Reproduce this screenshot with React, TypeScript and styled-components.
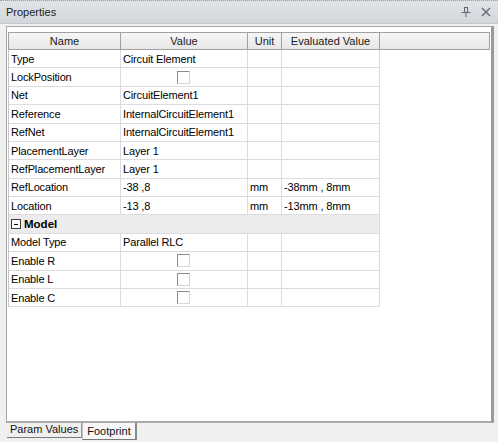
import React from "react";
import styled, { createGlobalStyle } from "styled-components";

const GlobalStyle = createGlobalStyle`
  html, body {
    margin: 0;
    padding: 0;
    background: #f0f0f0;
  }
  * {
    box-sizing: border-box;
  }
`;

const ROW_HEIGHT = 18.38;
const COLUMNS = "112px 127px 34px 98px";

type Row =
  | { kind: "prop"; name: string; value?: string; check?: boolean; unit?: string; evaluated?: string }
  | { kind: "category"; name: string };

const rows: Row[] = [
  { kind: "prop", name: "Type", value: "Circuit Element" },
  { kind: "prop", name: "LockPosition", check: true },
  { kind: "prop", name: "Net", value: "CircuitElement1" },
  { kind: "prop", name: "Reference", value: "InternalCircuitElement1" },
  { kind: "prop", name: "RefNet", value: "InternalCircuitElement1" },
  { kind: "prop", name: "PlacementLayer", value: "Layer 1" },
  { kind: "prop", name: "RefPlacementLayer", value: "Layer 1" },
  { kind: "prop", name: "RefLocation", value: "-38 ,8", unit: "mm", evaluated: "-38mm , 8mm" },
  { kind: "prop", name: "Location", value: "-13 ,8", unit: "mm", evaluated: "-13mm , 8mm" },
  { kind: "category", name: "Model" },
  { kind: "prop", name: "Model Type", value: "Parallel RLC" },
  { kind: "prop", name: "Enable R", check: true },
  { kind: "prop", name: "Enable L", check: true },
  { kind: "prop", name: "Enable C", check: true },
];

const Window = styled.div`
  width: 498px;
  height: 442px;
  display: flex;
  flex-direction: column;
  background: #f0f0f0;
  font-family: "Liberation Sans", Arial, sans-serif;
  font-size: 11px;
  color: #000;
  overflow: hidden;
`;

const TitleBar = styled.div`
  height: 24px;
  flex: none;
  display: flex;
  align-items: center;
  padding: 0 6px;
  background: linear-gradient(#e0e3e7, #d3d7dc);
  border-top: 1px dotted #9aa0a8;
  border-bottom: 1px solid #c4c9cf;
`;

const Title = styled.div`
  flex: 1;
  font-size: 11px;
  color: #1b1b1b;
`;

const TitleButtons = styled.div`
  display: flex;
  gap: 10px;
  align-items: center;
  padding-right: 1px;
`;

const Content = styled.div`
  flex: 1;
  margin: 2px 4px 0 6px;
  background: #fff;
  border-left: 1px solid #a7a7a7;
  border-top: 1px solid #a7a7a7;
  border-right: 3px solid #9a9a9a;
  border-bottom: 2px solid #ababab;
  padding: 5px 0 0 1px;
`;

const HeaderRow = styled.div`
  display: grid;
  grid-template-columns: ${COLUMNS} 1fr;
  height: 18px;
  margin-right: 1px;
  border: 1px solid #a0a0a0;
  background: linear-gradient(#f6f6f6, #e7e7e7);
`;

const HeaderCell = styled.div`
  display: flex;
  align-items: center;
  justify-content: center;
  border-right: 1px solid #a0a0a0;
  color: #1a1a1a;
  &:last-child {
    border-right: none;
  }
`;

const Body = styled.div`
  width: 371px;
  border-left: 1px solid #c8c8c8;
`;

const DataRow = styled.div<{ $category?: boolean }>`
  display: grid;
  grid-template-columns: ${COLUMNS};
  height: ${ROW_HEIGHT}px;
  background: ${(p) => (p.$category ? "#ececec" : "#fff")};
`;

const Cell = styled.div<{ $center?: boolean }>`
  display: flex;
  align-items: center;
  justify-content: ${(p) => (p.$center ? "center" : "flex-start")};
  padding-left: 2px;
  border-right: 1px solid #dcdcdc;
  border-bottom: 1px solid #dcdcdc;
  white-space: nowrap;
  overflow: hidden;
  letter-spacing: -0.15px;
`;

const CategoryCell = styled.div`
  grid-column: 1 / -1;
  display: flex;
  align-items: center;
  gap: 3px;
  padding-left: 2px;
  border-right: 1px solid #dcdcdc;
  border-bottom: 1px solid #dcdcdc;
  font-weight: bold;
  font-size: 11.5px;
`;

const Expander = styled.div`
  width: 10px;
  height: 10px;
  border: 1px solid #3c3c3c;
  background: #fff;
  display: flex;
  align-items: center;
  justify-content: center;
  &::after {
    content: "";
    width: 4px;
    height: 1px;
    background: #000;
  }
`;

const CheckBox = styled.div`
  width: 13px;
  height: 13px;
  margin-left: -3px;
  background: #fff;
  border-top: 1px solid #8c8c8c;
  border-left: 1px solid #8c8c8c;
  border-right: 1px solid #d6d6d6;
  border-bottom: 1px solid #d6d6d6;
`;

const TabStrip = styled.div`
  height: 19px;
  flex: none;
  display: flex;
  align-items: flex-start;
  padding-left: 7px;
`;

const Tab = styled.div<{ $active?: boolean }>`
  height: ${(p) => (p.$active ? 17 : 15)}px;
  padding: 0 ${(p) => (p.$active ? 4 : 3)}px;
  display: flex;
  align-items: ${(p) => (p.$active ? "center" : "flex-end")};
  font-size: 11px;
  line-height: 13px;
  color: #111;
  background: ${(p) => (p.$active ? "#f7f7f7" : "#efefef")};
  border-bottom: 1px solid #7a7a7a;
  border-right: ${(p) => (p.$active ? "2px solid #8a8a8a" : "1px solid #9a9a9a")};
  border-left: ${(p) => (p.$active ? "1px solid #c0c0c0" : "none")};
  padding-bottom: ${(p) => (p.$active ? 0 : 1)}px;
`;

function PinIcon() {
  return (
    <svg width="10" height="12" viewBox="0 0 10 12" fill="none" stroke="#5f6873" strokeWidth="1">
      <path d="M3.5 1 V6.5 M6.5 1 V6.5 M3.5 1.5 H6.5 M0.5 6.5 H9.5 M5 6.5 V11" />
    </svg>
  );
}

function CloseIcon() {
  return (
    <svg width="10" height="10" viewBox="0 0 10 10" fill="none" stroke="#5f6873" strokeWidth="1.3">
      <path d="M1 1 L9 9 M9 1 L1 9" />
    </svg>
  );
}

export default function App() {
  return (
    <Window>
      <GlobalStyle />
      <TitleBar>
        <Title>Properties</Title>
        <TitleButtons>
          <PinIcon />
          <CloseIcon />
        </TitleButtons>
      </TitleBar>
      <Content>
        <HeaderRow>
          <HeaderCell>Name</HeaderCell>
          <HeaderCell>Value</HeaderCell>
          <HeaderCell>Unit</HeaderCell>
          <HeaderCell>Evaluated Value</HeaderCell>
          <HeaderCell />
        </HeaderRow>
        <Body>
          {rows.map((row) =>
            row.kind === "category" ? (
              <DataRow key={row.name} $category>
                <CategoryCell>
                  <Expander />
                  {row.name}
                </CategoryCell>
              </DataRow>
            ) : (
              <DataRow key={row.name}>
                <Cell>{row.name}</Cell>
                <Cell $center={row.check}>{row.check ? <CheckBox /> : row.value}</Cell>
                <Cell>{row.unit}</Cell>
                <Cell>{row.evaluated}</Cell>
              </DataRow>
            ),
          )}
        </Body>
      </Content>
      <TabStrip>
        <Tab>Param Values</Tab>
        <Tab $active>Footprint</Tab>
      </TabStrip>
    </Window>
  );
}
